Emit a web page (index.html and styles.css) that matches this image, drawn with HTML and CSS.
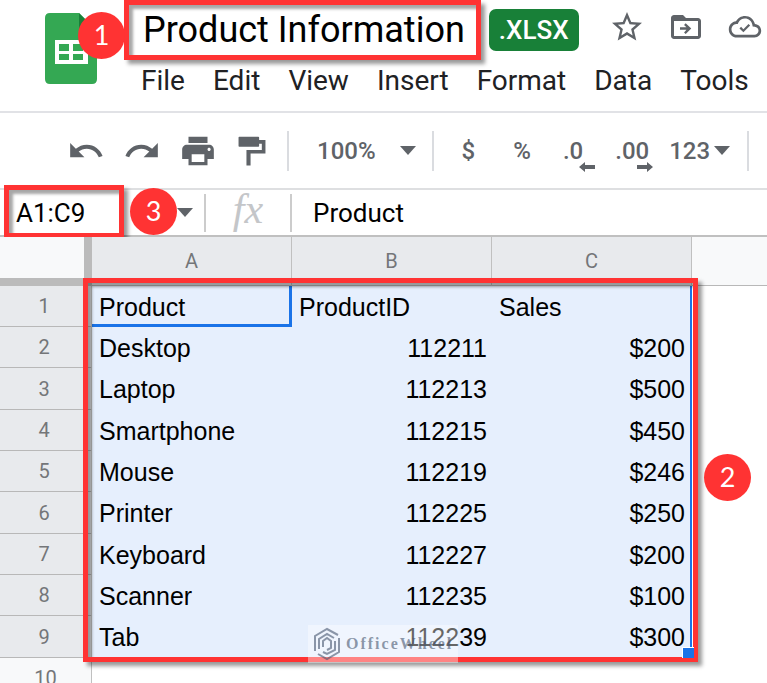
FILE: index.html
```html
<!DOCTYPE html>
<html lang="en">
<head>
    <meta charset="UTF-8">
    <meta name="viewport" content="width=device-width, initial-scale=1.0">
    <title>Product Information</title>
    <link rel="stylesheet" href="styles.css">
</head>
<body>
    <header class="doc-header">
        <div class="logo-wrap">
            <svg class="logo" viewBox="0 0 52 71" aria-hidden="true">
                <path fill="#34a853" d="M5 0h29l18 18v48q0 5-5 5H5q-5 0-5-5V5q0-5 5-5z"/>
                <path fill="#188038" d="M34 0l18 18H34z"/>
                <path fill="#fff" fill-rule="evenodd" d="M10 27h33v24H10zM14 31v7h10v-7zM28 31v7h10v-7zM14 41v6h10v-6zM28 41v6h10v-6z"/>
            </svg>
            <span class="step step-one">1</span>
        </div>
        <div class="doc-main">
            <div class="title-row">
                <h1 class="doc-title highlight">Product Information</h1>
                <span class="file-type">.XLSX</span>
                <div class="doc-actions">
                    <button class="icon-button" aria-label="Star">
                        <svg viewBox="0 0 24 24"><path d="M22 9.240l-7.190-.620L12 2 9.190 8.630 2 9.240l5.460 4.730L5.820 21 12 17.270 18.180 21l-1.630-7.030L22 9.240zM12 15.400l-3.760 2.270 1-4.280-3.320-2.880 4.380-.380L12 6.100l1.710 4.040 4.380.380-3.320 2.880 1 4.280L12 15.400z"/></svg>
                    </button>
                    <button class="icon-button" aria-label="Move">
                        <svg viewBox="0 0 24 24"><path d="M20 6h-8l-2-2H4c-1.100 0-2 .900-2 2v12c0 1.100.900 2 2 2h16c1.100 0 2-.900 2-2V8c0-1.100-.900-2-2-2zm0 12H4V8h16v10z"/><path d="M8 12.200h4.300l-1.600-1.600L11.800 9.500 15.500 13l-3.700 3.700-1.100-1.100 1.600-1.700H8z"/></svg>
                    </button>
                    <button class="icon-button" aria-label="Saved to Drive">
                        <svg viewBox="0 0 24 24"><g transform="translate(1.200 1) scale(.9)"><path d="M19.350 10.040C18.670 6.590 15.640 4 12 4 9.110 4 6.600 5.640 5.350 8.040 2.340 8.360 0 10.910 0 14c0 3.310 2.690 6 6 6h13c2.760 0 5-2.240 5-5 0-2.640-2.050-4.780-4.650-4.960zM19 18H6c-2.210 0-4-1.790-4-4 0-2.050 1.530-3.760 3.560-3.970l1.070-.110.500-.950C8.080 7.140 9.940 6 12 6c2.620 0 4.880 1.860 5.390 4.430l.300 1.500 1.530.110c1.560.100 2.780 1.410 2.780 2.960 0 1.650-1.350 3-3 3z"/><path d="M10.800 16.200l-2.900-2.900 1.200-1.200 1.700 1.700 3.800-3.800 1.200 1.200z"/></g></svg>
                    </button>
                </div>
            </div>
            <nav class="menu">
                <a href="#">File</a>
                <a href="#">Edit</a>
                <a href="#">View</a>
                <a href="#">Insert</a>
                <a href="#">Format</a>
                <a href="#">Data</a>
                <a href="#">Tools</a>
            </nav>
        </div>
    </header>

    <div class="toolbar" role="toolbar">
        <div class="tool-group tool-history">
            <button aria-label="Undo"><svg viewBox="0 0 24 24"><path d="M12.500 8c-2.650 0-5.050.990-6.900 2.600L2 7v9h9l-3.620-3.620c1.390-1.160 3.160-1.880 5.120-1.880 3.540 0 6.550 2.310 7.600 5.500l2.370-.780C21.080 11.030 17.150 8 12.500 8z"/></svg></button>
            <button aria-label="Redo"><svg viewBox="0 0 24 24"><path d="M18.400 10.600C16.550 8.990 14.150 8 11.500 8c-4.650 0-8.580 3.030-9.960 7.220L3.900 16c1.050-3.190 4.050-5.500 7.600-5.500 1.950 0 3.730.720 5.120 1.880L13 16h9V7l-3.600 3.600z"/></svg></button>
            <button aria-label="Print"><svg viewBox="0 0 24 24"><path d="M19 8H5c-1.660 0-3 1.340-3 3v6h4v4h12v-4h4v-6c0-1.660-1.340-3-3-3zm-3 11H8v-5h8v5zm3-7c-.550 0-1-.450-1-1s.450-1 1-1 1 .450 1 1-.450 1-1 1zm-1-9H6v4h12V3z"/></svg></button>
            <button aria-label="Paint format"><svg viewBox="0 0 24 24"><path d="M4 3h12q.5 0 .5.500v1.500h4v8.600h-9.400v7.500H8.500V11.300h9.700V7.400h-1.700v1.400q0 .5-.5.500H4q-.5 0-.5-.5V3.500q0-.5.5-.5z"/></svg></button>
        </div>
        <div class="tool-group tool-zoom">
            <button class="with-arrow">100%</button>
        </div>
        <div class="tool-group tool-format">
            <button>$</button>
            <button>%</button>
            <button class="decimal" aria-label="Decrease decimal places">.0
                <svg class="decimal-arrow" viewBox="0 0 16 10"><path d="M0 5l6-5v3h10v4H6v3z"/></svg>
            </button>
            <button class="decimal" aria-label="Increase decimal places">.00
                <svg class="decimal-arrow increase" viewBox="0 0 16 10"><path d="M16 5l-6-5v3H0v4h10v3z"/></svg>
            </button>
            <button class="with-arrow number-format">123</button>
        </div>
    </div>

    <div class="formula-bar">
        <div class="name-box">
            <input class="name-input" type="text" value="A1:C9" aria-label="Name box">
            <span class="range-frame highlight"></span>
            <span class="step step-three">3</span>
        </div>
        <label class="fx" for="formula">fx</label>
        <input class="formula-input" id="formula" type="text" value="Product">
    </div>

    <main class="sheet">
        <table class="grid">
            <colgroup>
                <col class="col-head">
                <col class="col-data">
                <col class="col-data">
                <col class="col-data">
                <col>
            </colgroup>
            <thead>
                <tr><th class="corner"></th><th>A</th><th>B</th><th>C</th><th class="blank"></th></tr>
            </thead>
            <tbody>
                <tr><th>1</th><td class="active">Product</td><td>ProductID</td><td>Sales</td><td></td></tr>
                <tr><th>2</th><td>Desktop</td><td class="num">112211</td><td class="num">$200</td><td></td></tr>
                <tr><th>3</th><td>Laptop</td><td class="num">112213</td><td class="num">$500</td><td></td></tr>
                <tr><th>4</th><td>Smartphone</td><td class="num">112215</td><td class="num">$450</td><td></td></tr>
                <tr><th>5</th><td>Mouse</td><td class="num">112219</td><td class="num">$246</td><td></td></tr>
                <tr><th>6</th><td>Printer</td><td class="num">112225</td><td class="num">$250</td><td></td></tr>
                <tr><th>7</th><td>Keyboard</td><td class="num">112227</td><td class="num">$200</td><td></td></tr>
                <tr><th>8</th><td>Scanner</td><td class="num">112235</td><td class="num">$100</td><td></td></tr>
                <tr><th>9</th><td>Tab</td><td class="num">112239</td><td class="num">$300</td><td></td></tr>
            </tbody>
            <tfoot>
                <tr><th>10</th><td></td><td></td><td></td><td></td></tr>
            </tfoot>
        </table>
        <div class="selection-frame highlight"></div>
        <span class="fill-handle"></span>
        <span class="step step-two">2</span>
        <div class="watermark">
            <svg viewBox="0 0 30 34" aria-hidden="true">
                <path d="M3 24V9L15 2l11 6M27 11v14l-12 7-9-5M7 22V12l8-5 7 4M23 14v9l-8 4-4-2M11 20v-6l4-3 4 3v7l-4 2"/>
            </svg>
            <span>OfficeWheel</span>
        </div>
    </main>
</body>
</html>
```

FILE: styles.css
```css
:root {
    --red: #ff3333;
    --blue: #1a73e8;
    --icon: #5f6368;
    --line: #c0c0c0;
    --head: #e8eaed;
    --head-plain: #f8f9fa;
    --selected: #e6effd;
}

* {
    box-sizing: border-box;
    margin: 0;
    padding: 0;
}

body {
    font-family: Roboto, sans-serif;
    background: #fff;
    color: #202124;
    min-height: 100vh;
    overflow: hidden;
}

button,
input {
    font: inherit;
    color: inherit;
    border: none;
    background: none;
    outline: none;
}

button {
    cursor: pointer;
}

svg {
    display: block;
    fill: currentColor;
}

/* red frames and numbered steps */
.highlight {
    border: 5px solid var(--red);
    box-shadow: 4px 4px 4px rgba(0, 0, 0, 0.4),
                inset 4px 4px 3px rgba(0, 0, 0, 0.35);
}

.step {
    position: absolute;
    width: 47px;
    height: 47px;
    border-radius: 50%;
    background: var(--red);
    color: #fff;
    font-family: Lato, sans-serif;
    font-size: 27px;
    line-height: 45px;
    text-align: center;
}

/* header */
.doc-header {
    display: flex;
    height: 113px;
    padding-left: 45px;
    border-bottom: 2px solid #e1e2e6;
}

.logo-wrap {
    position: relative;
    flex: none;
    width: 79px;
    padding-top: 13px;
}

.logo {
    width: 52px;
    height: 71px;
}

.step-one {
    left: 33px;
    top: 12px;
}

.title-row {
    display: flex;
    align-items: center;
    height: 60px;
}

.doc-title {
    padding: 0 11px 0 14px;
    font-size: 36px;
    font-weight: 400;
    line-height: 50px;
    color: #000;
    white-space: nowrap;
}

.file-type {
    margin-left: 8px;
    padding: 0 10px;
    border-radius: 7px;
    background: #188038;
    color: #fff;
    font-size: 26px;
    font-weight: 500;
    line-height: 42px;
}

.doc-actions {
    display: flex;
    gap: 23px;
    margin-left: 30px;
    padding-bottom: 6px;
    color: var(--icon);
}

.icon-button svg {
    width: 36px;
    height: 36px;
}

.menu {
    display: flex;
    gap: 28px;
    padding: 1px 0 0 17px;
}

.menu a {
    color: inherit;
    font-size: 28px;
    line-height: 40px;
    text-decoration: none;
}

/* toolbar */
.toolbar {
    display: flex;
    align-items: center;
    height: 77px;
    border-bottom: 2px solid #dedfe1;
    color: var(--icon);
    font-size: 24px;
    font-weight: 500;
}

.tool-group {
    display: flex;
    align-items: center;
    height: 40px;
    border-right: 2px solid #dadce0;
}

.tool-history {
    gap: 18px;
    padding: 0 16px 0 67px;
}

.tool-history svg {
    width: 38px;
    height: 38px;
}

.tool-history button:last-child {
    margin-left: -2px;
}

.tool-zoom {
    padding: 0 16px 0 28px;
}

.tool-format {
    padding: 0 17px 0 28px;
}

.tool-format button {
    margin-right: 32px;
}

.tool-format button:first-child {
    margin-right: 38px;
}

.with-arrow {
    display: flex;
    align-items: center;
    gap: 24px;
}

.with-arrow::after {
    content: "";
    border: 8px solid transparent;
    border-top: 9px solid var(--icon);
    border-bottom: none;
}

.tool-format .number-format {
    gap: 4px;
    margin: 0;
}

.tool-format .decimal {
    position: relative;
}

.tool-format .decimal + .number-format {
    margin-left: -12px;
}

.decimal-arrow {
    position: absolute;
    right: -12px;
    bottom: -7px;
    width: 16px;
    height: 10px;
}

.decimal-arrow.increase {
    right: -4px;
}

/* formula bar */
.formula-bar {
    display: flex;
    align-items: center;
    height: 47px;
    border-bottom: 2px solid var(--line);
    font-size: 26px;
    color: #000;
}

.name-box {
    position: relative;
    display: flex;
    align-items: center;
    width: 206px;
    height: 38px;
    border-right: 2px solid #ccc;
}

.name-box::after {
    content: "";
    border: 8px solid transparent;
    border-top: 9px solid var(--icon);
    border-bottom: none;
}

.name-input {
    width: 177px;
    padding-left: 16px;
}

.range-frame {
    position: absolute;
    left: 4px;
    top: -9px;
    width: 120px;
    height: 53px;
}

.step-three {
    left: 130px;
    top: -6px;
}

.fx {
    width: 86px;
    height: 38px;
    border-right: 2px solid #ccc;
    font-family: "Liberation Serif", serif;
    font-size: 42px;
    font-style: italic;
    line-height: 30px;
    text-align: center;
    color: #c4c6c9;
}

.formula-input {
    flex: 1;
    min-width: 0;
    padding-left: 21px;
}

/* sheet */
.sheet {
    position: relative;
}

.grid {
    width: 100%;
    table-layout: fixed;
    border-collapse: separate;
    border-spacing: 0;
}

.col-head {
    width: 92px;
}

.col-data {
    width: 200px;
}

.grid th {
    height: 41px;
    border-right: 1px solid var(--line);
    border-bottom: 1px solid #b8b8b8;
    background: var(--head);
    color: #747679;
    font-size: 20px;
    font-weight: 400;
}

.grid tr:nth-child(3n) th {
    height: 42px;
}

.grid tbody th {
    padding-right: 3px;
}

.grid thead th {
    height: 49px;
}

.grid .corner {
    background: var(--head-plain);
    border-right: 8px solid #bbb;
    border-bottom: 8px solid #bbb;
}

.grid .blank,
.grid tfoot th {
    background: var(--head-plain);
}

.grid .blank {
    border-right: none;
}

.grid td {
    padding: 0 7px;
    font-family: "Liberation Sans", sans-serif;
    font-size: 25px;
    line-height: 40px;
    color: #000;
}

.grid tbody td {
    background: var(--selected);
}

.grid tbody td:last-child {
    background: none;
}

.grid .num {
    padding-right: 5px;
    text-align: right;
}

.grid td.active {
    box-shadow: inset -3px -3px 0 var(--blue);
}

.grid tbody td:nth-child(4) {
    border-right: 2px solid var(--blue);
}

.grid tbody tr:last-child td:not(:last-child) {
    border-bottom: 1px solid var(--blue);
}

.selection-frame {
    position: absolute;
    left: 83px;
    top: 41px;
    width: 615px;
    height: 384px;
}

.fill-handle {
    position: absolute;
    left: 682px;
    top: 410px;
    width: 12px;
    height: 11px;
    border-left: 1px solid #fff;
    border-top: 1px solid #fff;
    background: var(--blue);
}

.step-two {
    left: 704px;
    top: 217px;
}

.watermark {
    position: absolute;
    left: 308px;
    top: 388px;
    display: flex;
    align-items: center;
    gap: 4px;
    width: 150px;
    height: 38px;
    padding-left: 4px;
    background: rgba(255, 255, 255, 0.4);
    color: rgba(70, 85, 110, 0.6);
    font-family: "Liberation Serif", serif;
    font-size: 16px;
    font-weight: 700;
    letter-spacing: 2px;
}

.watermark svg {
    width: 30px;
    height: 34px;
    fill: none;
    stroke: currentColor;
    stroke-width: 2;
}
```
